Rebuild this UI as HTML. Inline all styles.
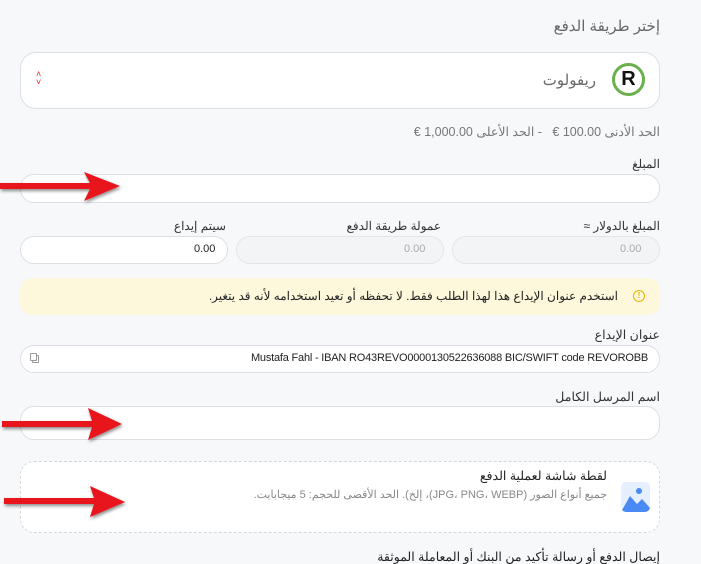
<!DOCTYPE html>
<html><head><meta charset="utf-8"><style>
*{box-sizing:border-box;margin:0;padding:0}
body{width:701px;height:553px;overflow:hidden;background:#f7f8fa;font-family:"Liberation Sans","Noto Sans CJK SC",sans-serif;color:#333;position:relative}
.a{position:absolute}
.t{direction:rtl;white-space:nowrap}
.box{position:absolute;background:#fff;border:1px solid #dcdfe4;border-radius:14px}
.dis{background:#f3f4f6;border-color:#e3e5e8}
</style></head><body>
<div class="a t" style="right:41px;top:17px;font-size:15px;color:#666">إختر طريقة الدفع</div>
<div class="box" style="left:20px;top:52px;width:640px;height:57px;border-radius:16px"></div>
<div class="a" style="left:612px;top:63px;width:33px;height:33px;border-radius:50%;border:3px solid #6ab04c;background:#fff;font:bold 20px 'Liberation Sans';color:#111;text-align:center;line-height:27px">R</div>
<div class="a t" style="right:105px;top:71px;font-size:15px;color:#666">ريفولوت</div>
<div class="a" style="left:36px;top:70px;font-size:9px;color:#e22;line-height:8px">˄<br>˅</div>
<div class="a t" style="right:41px;top:124px;font-size:12.5px;color:#777">الحد الأدنى 100.00 €&nbsp;&nbsp; - الحد الأعلى 1,000.00 €</div>
<div class="a t" style="right:41px;top:157px;font-size:12px;color:#333">المبلغ</div>
<div class="box" style="left:20px;top:174px;width:640px;height:29px"></div>
<div class="a t" style="right:41px;top:219px;font-size:12px">المبلغ بالدولار ≈</div>
<div class="a t" style="right:260px;top:219px;font-size:12px">عمولة طريقة الدفع</div>
<div class="a t" style="right:475px;top:219px;font-size:12px">سيتم إيداع</div>
<div class="box dis" style="left:452px;top:236px;width:208px;height:28px"></div>
<div class="box dis" style="left:236px;top:236px;width:208px;height:28px"></div>
<div class="box" style="left:20px;top:236px;width:208px;height:28px"></div>
<div class="a" style="left:620px;top:243px;font-size:11px;color:#aaa">0.00</div>
<div class="a" style="left:404px;top:243px;font-size:11px;color:#aaa">0.00</div>
<div class="a" style="left:194px;top:243px;font-size:11px;color:#222">0.00</div>
<div class="a" style="left:20px;top:278px;width:640px;height:37px;background:#fdf7dc;border-radius:12px"></div>
<div class="a" style="left:633px;top:290px;width:12px;height:12px;border:1.5px solid #e8b400;border-radius:50%;font:bold 8px 'Liberation Sans';color:#e8b400;text-align:center;line-height:9px">!</div>
<div class="a t" style="right:83px;top:289px;font-size:12px;color:#222">استخدم عنوان الإيداع هذا لهذا الطلب فقط. لا تحفظه أو تعيد استخدامه لأنه قد يتغير.</div>
<div class="a t" style="right:41px;top:327px;font-size:12.5px">عنوان الإيداع</div>
<div class="box" style="left:20px;top:345px;width:640px;height:28px"></div>
<div class="a" style="left:30px;top:353px;width:7px;height:8px;border:1px solid #999;border-radius:1px;box-shadow:2px 2px 0 -1px #fff,2px 2px 0 0 #999"></div>
<div class="a" style="right:53px;top:352px;font-size:11px;color:#222;letter-spacing:-0.2px;white-space:nowrap">Mustafa Fahl - IBAN RO43REVO0000130522636088 BIC/SWIFT code REVOROBB</div>
<div class="a t" style="right:41px;top:389px;font-size:12.5px">اسم المرسل الكامل</div>
<div class="box" style="left:20px;top:406px;width:640px;height:34px"></div>
<div class="a" style="left:20px;top:461px;width:640px;height:72px;border:1px dashed #d3d6db;border-radius:14px;background:#fff"></div>
<div class="a" style="left:621px;top:482px;width:29px;height:30px;background:#e6efff;border-radius:5px;overflow:hidden">
<svg width="29" height="30"><circle cx="18" cy="9" r="3" fill="#4a8af4"/><path d="M0 30 L9 14 L16 22 L21 17 L29 26 L29 30Z" fill="#4a8af4"/></svg></div>
<div class="a t" style="right:94px;top:468px;font-size:12.5px;color:#222">لقطة شاشة لعملية الدفع</div>
<div class="a t" style="right:94px;top:488px;font-size:11px;color:#888">جميع أنواع الصور (JPG، PNG، WEBP)، إلخ). الحد الأقصى للحجم: 5 ميجابايت.</div>
<div class="a t" style="right:41px;top:549px;font-size:12.5px;color:#222">إيصال الدفع أو رسالة تأكيد من البنك أو المعاملة الموثقة</div>
<svg class="a" style="left:0;top:0" width="701" height="553">
<defs><filter id="s"><feDropShadow dx="1" dy="2" stdDeviation="1.5" flood-opacity="0.45"/></filter></defs>
<g fill="#e8141c" filter="url(#s)">
<path d="M0 183 L90 183 L84 172 L120 186 L84 201 L90 189 L0 189Z"/>
<path d="M2 421 L92 421 L88 408 L122 424 L88 440 L92 427 L2 427Z"/>
<path d="M4 498 L94 498 L90 486 L125 502 L90 517 L94 504 L4 504Z"/>
</g></svg>
</body></html>
